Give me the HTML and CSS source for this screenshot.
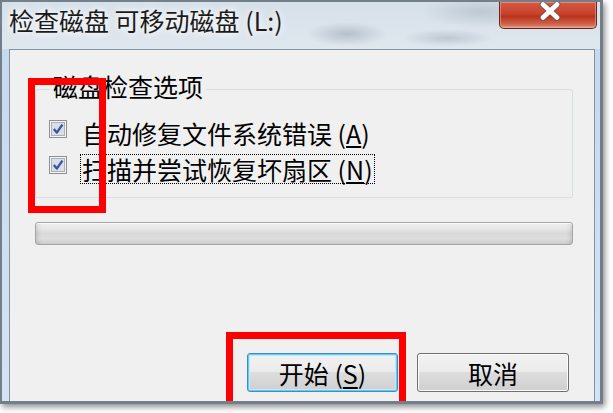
FILE: index.html
```html
<!DOCTYPE html>
<html lang="zh-CN">
<head>
<meta charset="utf-8">
<title>检查磁盘 可移动磁盘 (L:)</title>
<link rel="stylesheet" href="styles.css">
</head>
<body>
<div class="window">
  <div class="titlebar">
    <div class="title">检查磁盘 可移动磁盘 (L:)</div>
    <div class="close">
      <svg class="close-x" width="26" height="19" viewBox="0 0 26 19">
        <path d="M6 2.5 L20 15.5 M20 2.5 L6 15.5" stroke="#5a5a5a" stroke-width="7" stroke-linecap="round" fill="none" opacity="0.55"/>
        <path d="M6 2.5 L20 15.5 M20 2.5 L6 15.5" stroke="#ffffff" stroke-width="4.6" stroke-linecap="round" fill="none"/>
      </svg>
    </div>
  </div>
  <div class="panel">
    <fieldset class="group">
      <legend>磁盘检查选项</legend>
      <div class="row">
        <svg class="cb" width="18" height="18" viewBox="0 0 18 18">
          <rect x="0.5" y="0.5" width="17" height="17" fill="#f6f6f6" stroke="#8e8f8f"/>
          <rect x="2.5" y="2.5" width="13" height="13" fill="#dadee7" stroke="#aab0b9"/>
          <path d="M4.8 9 L7.8 12.6 L13.4 4.6" fill="none" stroke="#3d55a6" stroke-width="2.4" stroke-linejoin="round"/>
        </svg>
        <span class="lbl">自动修复文件系统错误 (<u>A</u>)</span>
      </div>
      <div class="row">
        <svg class="cb" width="18" height="18" viewBox="0 0 18 18">
          <rect x="0.5" y="0.5" width="17" height="17" fill="#f6f6f6" stroke="#8e8f8f"/>
          <rect x="2.5" y="2.5" width="13" height="13" fill="#dadee7" stroke="#aab0b9"/>
          <path d="M4.8 9 L7.8 12.6 L13.4 4.6" fill="none" stroke="#3d55a6" stroke-width="2.4" stroke-linejoin="round"/>
        </svg>
        <span class="lbl focus">扫描并尝试恢复坏扇区 (<u>N</u>)</span>
      </div>
    </fieldset>
    <div class="progress"></div>
    <div class="buttons">
      <button class="btn btn-default">开始 (<u>S</u>)</button>
      <button class="btn">取消</button>
    </div>
  </div>
</div>
<div class="mark mark-options"></div>
<div class="mark mark-start"></div>
</body>
</html>
```
FILE: styles.css
```css
html, body {
  margin: 0;
  padding: 0;
}
body {
  width: 613px;
  height: 413px;
  background: #ffffff;
  font-family: "Noto Sans CJK SC", "Noto Sans", sans-serif;
  position: relative;
  overflow: hidden;
}
.window {
  width: 603px;
  height: 404px;
  box-sizing: border-box;
  border-style: solid;
  border-color: #727e8a;
  border-width: 2px 3px 3px 2px;
  display: flex;
  flex-direction: column;
  box-shadow: 2px 3px 6px rgba(0, 0, 0, 0.45);
  background:
    radial-gradient(ellipse 40px 12px at 345px 32px, rgba(110, 125, 140, 0.35), rgba(110, 125, 140, 0)),
    radial-gradient(ellipse 45px 9px at 445px 36px, rgba(110, 125, 140, 0.28), rgba(110, 125, 140, 0)),
    radial-gradient(ellipse 60px 16px at 480px 10px, rgba(110, 125, 140, 0.25), rgba(110, 125, 140, 0)),
    linear-gradient(to bottom, #d6e0e9 0, #dfe7ee 47px, #c6d9ed 47px, #d3e3f3 100%);
}
.titlebar {
  height: 47px;
  display: flex;
  align-items: flex-start;
}
.title {
  flex: 1;
  padding-left: 7px;
  font-size: 25px;
  line-height: 36px;
  color: #1b1b1b;
  white-space: nowrap;
  text-shadow: 0 0 6px #ffffff, 0 0 12px rgba(255, 255, 255, 0.9);
}
.close {
  width: 98px;
  height: 27px;
  box-sizing: border-box;
  margin-right: 3px;
  border: 1px solid #5e2a20;
  border-top: none;
  border-radius: 0 0 5px 5px;
  background: linear-gradient(to bottom, #d55a44 0, #c8412b 45%, #b9321d 55%, #cf624a 85%, #e59a88 100%);
  box-shadow: inset 0 0 0 1px rgba(255, 190, 175, 0.45);
  display: flex;
  justify-content: center;
  align-items: flex-start;
}
.close-x {
  display: block;
  margin: 0 0 0 4px;
}
.panel {
  flex: 1;
  margin: 0 5px 0 7px;
  border: 1px solid #8393a3;
  border-bottom: none;
  background: #f0f0f0;
  display: flex;
  flex-direction: column;
}
.group {
  margin: 23px 21px 0 25px;
  padding: 13px 0 13px 13px;
  border: 1px solid #d5dfe5;
  border-radius: 3px;
  min-width: 0;
}
.group legend {
  margin-left: 1px;
  padding: 0 3px 6px;
  font-size: 25px;
  line-height: 26px;
  color: #000000;
}
.row {
  display: flex;
  align-items: flex-start;
  height: 30px;
}
.row + .row {
  margin-top: 6px;
}
.cb {
  display: block;
  flex: none;
  margin-top: 2px;
}
.lbl {
  margin-left: 13px;
  padding: 0 1px;
  font-size: 25px;
  line-height: 28px;
  color: #000000;
  border: 1px solid transparent;
  white-space: nowrap;
}
.lbl.focus {
  border: 1px dotted #000000;
}
.progress {
  margin: 24px 21px 0 25px;
  height: 23px;
  box-sizing: border-box;
  border: 1px solid #a5a5a5;
  border-radius: 3px;
  background: linear-gradient(to bottom, #f0f0f0 0, #e6e6e6 30%, #d9d9d9 50%, #dedede 75%, #cdcdcd 100%);
  box-shadow:
    inset 0 1px 0 #fafafa,
    inset 5px 0 4px -3px rgba(0, 0, 0, 0.12),
    inset -5px 0 4px -3px rgba(0, 0, 0, 0.12);
}
.buttons {
  display: flex;
  justify-content: flex-end;
  gap: 19px;
  margin-top: 108px;
  padding-right: 25px;
}
.btn {
  width: 152px;
  height: 39px;
  box-sizing: border-box;
  padding: 0;
  font-family: "Noto Sans CJK SC", "Noto Sans", sans-serif;
  font-size: 25px;
  line-height: 30px;
  color: #000000;
  border: 1px solid #707070;
  border-radius: 3px;
  background: linear-gradient(to bottom, #f2f2f2 0, #ebebeb 50%, #dddddd 50%, #cfcfcf 100%);
  box-shadow: inset 0 0 0 1px #fbfbfb;
}
.btn u {
  text-underline-offset: 3px;
}
.btn-default {
  width: 151px;
  border-color: #3a8fc9;
  box-shadow: inset 0 0 0 1px #62ccf4, inset 0 0 0 2px #bfe9f9;
}
.mark {
  position: absolute;
  box-sizing: border-box;
  border: 7px solid #fe0000;
}
.mark-options {
  left: 28px;
  top: 78px;
  width: 78px;
  height: 135px;
}
.mark-start {
  left: 226px;
  top: 332px;
  width: 180px;
  height: 69px;
  border-bottom: none;
}
```
